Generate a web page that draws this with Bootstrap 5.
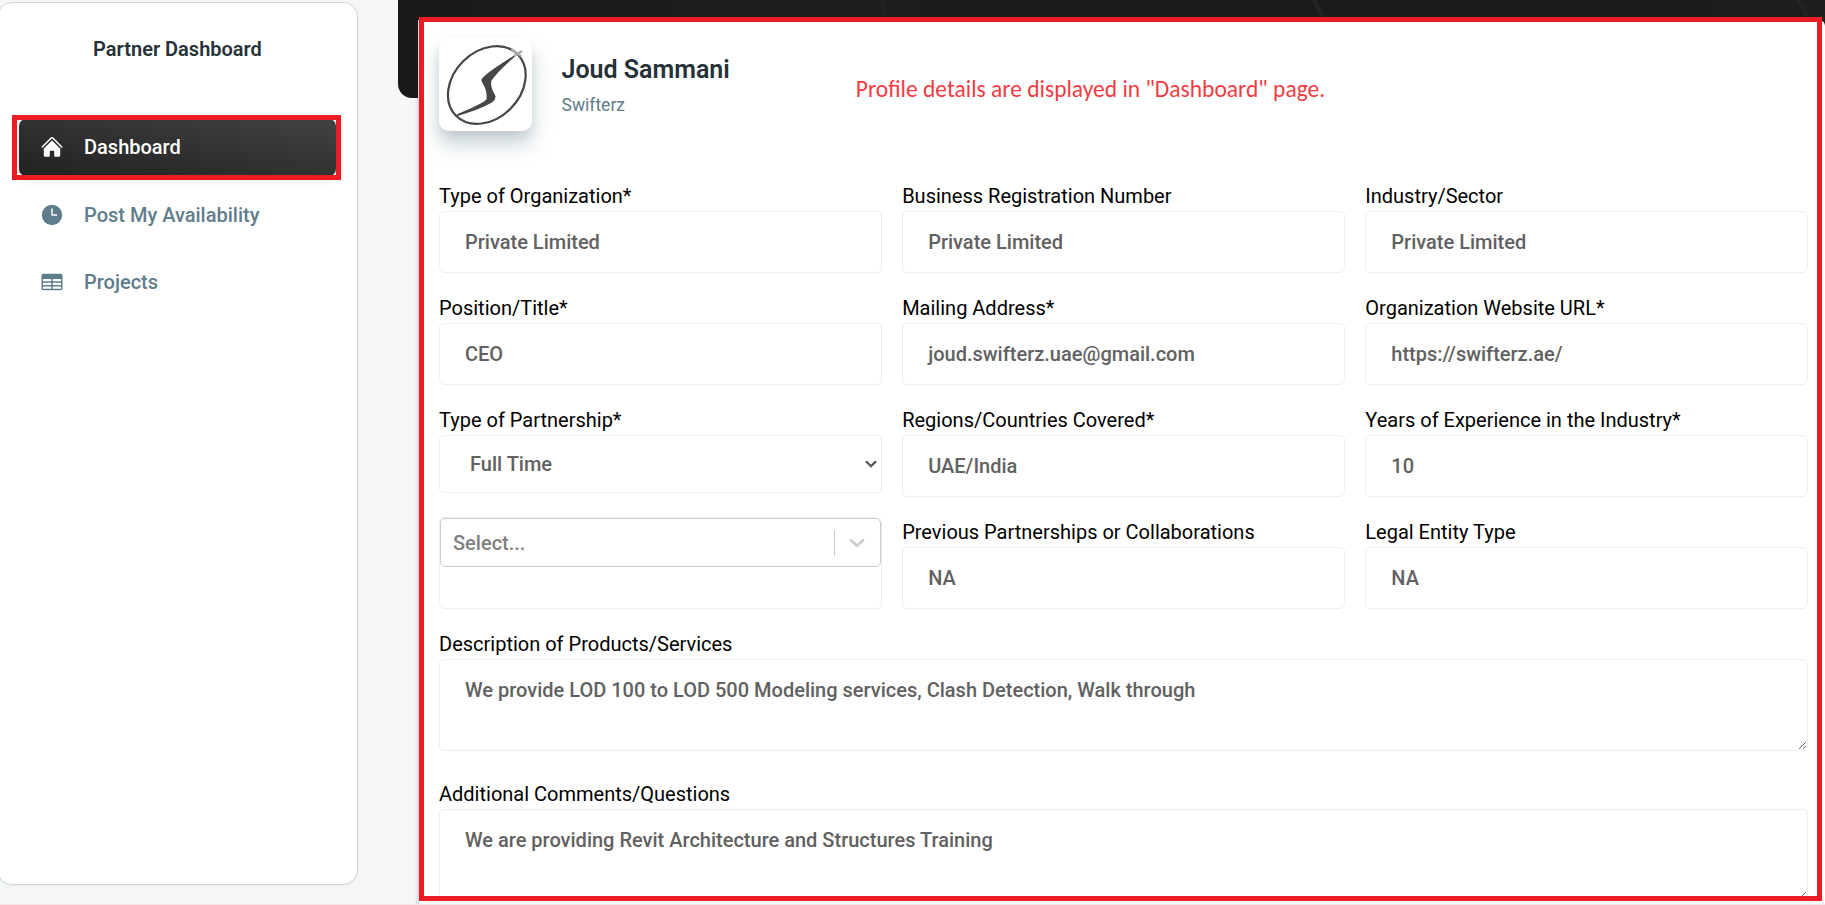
<!DOCTYPE html>
<html lang="en">
<head>
<meta charset="utf-8">
<meta name="viewport" content="width=device-width, initial-scale=1">
<title>Partner Dashboard</title>
<link href="https://cdn.jsdelivr.net/npm/bootstrap@5.3.0/dist/css/bootstrap.min.css" rel="stylesheet">
<style>
  body { height: 905px; overflow: hidden; background: #f5f6f8; font-family: Roboto, sans-serif; font-size: 20px; line-height: 30px; color: #000; }
  .side-panel { width: 361px; height: 883px; margin: 2px 0 0 -3px; background: #fff; border: 1px solid #cfd8dc; border-radius: 15px; box-shadow: 0 1px 2px rgba(0,0,0,.05); }
  .side-title { font-weight: 600; color: #263238; padding: 31px 0 0; }
  .side-nav { margin: 54.5px 21px 0; gap: 10.5px; }
  .side-nav .nav-link { height: 57px; padding: 0 0 0 20.5px; gap: 20.5px; font-weight: 500; color: #607d8b; border-radius: 7px; }
  .side-nav .nav-link.active { color: #fff; background: linear-gradient(10deg, #212121, #424242); box-shadow: 0 4px 8px rgba(0,0,0,.12); }
  .side-nav svg { width: 24px; height: 24px; flex: none; }
  .main-area { width: 1427px; height: 905px; margin-left: 40px; }
  .hero { height: 98px; border-bottom-left-radius: 14px; background: linear-gradient(62deg, transparent 38%, #272727 50%, transparent 62%) 910px 0 / 22px 18px no-repeat, linear-gradient(62deg, transparent 38%, #252525 50%, transparent 62%) 1394px 0 / 22px 18px no-repeat, linear-gradient(75deg, transparent 35%, #212121 50%, transparent 65%) 476px 0 / 20px 18px no-repeat, linear-gradient(90deg, #191919, #1d1d1d 25%, #1b1b1b 50%, #1a1a1a 75%, #1d1d1d); }
  .profile { height: 890px; margin: -78px 0 0 20px; padding: 18px 17px 0 20px; background: #fff; border-left: 1px solid #cfd8dc; border-top-right-radius: 6px; box-shadow: 0 2px 4px rgba(55,71,79,.25); position: relative; }
  .avatar-box { width: 93px; height: 93px; border-radius: 10px; background: #fff; box-shadow: 0 13px 20px rgba(96,125,139,.36), 0 4px 7px rgba(96,125,139,.1); }
  .person { margin-left: 29.5px; padding-top: 15px; }
  .person h1 { font-size: 25px; font-weight: 600; line-height: 33px; color: #263238; margin: 0 0 6px; }
  .person p { font-size: 17.5px; line-height: 26px; color: #607d8b; margin: 0; }
  .callout { font-family: Carlito, Lato, sans-serif; font-size: 23.5px; color: #f23c43; white-space: nowrap; margin-left: 126px; padding-top: 36px; }
  .fields { --bs-gutter-x: 20.5px; --bs-gutter-y: 20px; margin-top: 30px; }
  .fields label { display: block; height: 30px; }
  .fields .form-control { height: 62px; padding: 15px 25px; border: 1px solid #eee; border-radius: 5px; color: #616161; font-size: 20px; font-weight: 500; line-height: 30px; background: #fff; }
  .fields textarea.form-control { height: 92px; margin-bottom: 8px; }
  .fields .pick { height: 58px; padding: 0 4px 0 30px; }
  .fields .multi { height: 92px; padding: 0; }
  .multi-control { height: 49px; border: 1px solid #ccc; border-radius: 5px; color: #808080; padding-left: 12px; }
  .multi-arrow { width: 46px; height: 26px; border-left: 1px solid #ccc; }
  .mark-box { position: absolute; border: 5px solid #ed1c24; pointer-events: none; z-index: 5; }
  .mark-nav { left: 12px; top: 115px; width: 329px; height: 65px; }
  .mark-profile { left: 419px; top: 17px; width: 1403px; height: 884px; }
  .foot-line { position: absolute; left: 0; right: 0; top: 904px; height: 1px; background: #f5e3e6; z-index: 4; }
</style>
</head>
<body class="d-flex position-relative">
  <aside class="side-panel flex-shrink-0">
    <div class="side-title text-center">Partner Dashboard</div>
    <nav class="side-nav nav flex-column">
      <a class="nav-link active d-flex align-items-center" href="#">
        <svg viewBox="0 0 24 24" fill="currentColor"><path d="M11.47 3.84a.75.75 0 0 1 1.06 0l8.69 8.69a.75.75 0 1 0 1.06-1.06l-8.69-8.69a2.25 2.25 0 0 0-3.18 0l-8.69 8.69a.75.75 0 0 0 1.06 1.06l8.69-8.69z"/><path d="M12 5.43l8.16 8.16.09.09v6.2c0 1.03-.84 1.87-1.87 1.87H15a.75.75 0 0 1-.75-.75v-4.5a.75.75 0 0 0-.75-.75h-3a.75.75 0 0 0-.75.75V21a.75.75 0 0 1-.75.75H5.63a1.87 1.87 0 0 1-1.88-1.87v-6.2l.09-.09L12 5.43z"/></svg>
        <span>Dashboard</span>
      </a>
      <a class="nav-link d-flex align-items-center" href="#">
        <svg viewBox="0 0 24 24" fill="currentColor"><path fill-rule="evenodd" d="M12 1.8a10.2 10.2 0 1 0 0 20.4 10.2 10.2 0 0 0 0-20.4zM12.75 6a.75.75 0 0 0-1.5 0v6c0 .41.34.75.75.75h4.5a.75.75 0 0 0 0-1.5h-3.75V6z"/></svg>
        <span>Post My Availability</span>
      </a>
      <a class="nav-link d-flex align-items-center" href="#">
        <svg viewBox="0 0 24 24" fill="currentColor"><path fill-rule="evenodd" d="M1.5 5.63c0-1.04.84-1.88 1.88-1.88h17.25c1.03 0 1.87.84 1.87 1.88v12.75c0 1.03-.84 1.87-1.87 1.87H3.38a1.87 1.87 0 0 1-1.88-1.87V5.63zM21 9.38a.38.38 0 0 0-.38-.38h-7.5a.37.37 0 0 0-.37.38v1.5c0 .2.17.37.37.37h7.5a.38.38 0 0 0 .38-.37v-1.5zm0 3.75a.38.38 0 0 0-.38-.38h-7.5a.37.37 0 0 0-.37.38v1.5c0 .2.17.37.37.37h7.5a.38.38 0 0 0 .38-.37v-1.5zm0 3.75a.38.38 0 0 0-.38-.38h-7.5a.37.37 0 0 0-.37.38v1.5c0 .2.17.37.37.37h7.5a.38.38 0 0 0 .38-.37v-1.5zM10.88 18.75a.38.38 0 0 0 .37-.37v-1.5a.38.38 0 0 0-.37-.38h-7.5a.37.37 0 0 0-.38.38v1.5c0 .2.17.37.38.37h7.5zM3.38 15h7.5a.38.38 0 0 0 .37-.37v-1.5a.38.38 0 0 0-.37-.38h-7.5a.37.37 0 0 0-.38.38v1.5c0 .2.17.37.38.37zM3 10.88c0 .2.17.37.38.37h7.5a.38.38 0 0 0 .37-.37v-1.5a.38.38 0 0 0-.37-.38h-7.5a.37.37 0 0 0-.38.38v1.5z"/></svg>
        <span>Projects</span>
      </a>
    </nav>
  </aside>

  <main class="main-area flex-shrink-0">
    <div class="hero"></div>
    <section class="profile">
      <div class="d-flex align-items-start">
        <div class="avatar-box flex-shrink-0">
          <svg class="d-block" width="93" height="93" viewBox="0 -1.5 93 93"><ellipse cx="47.800" cy="45.500" rx="43.500" ry="33.500" transform="rotate(-45 47.8 45.5)" fill="none" stroke="#474747" stroke-width="2.200"/><path d="M78 14 C66 22 52 30 43 39 Q41.800 41 43.500 43.500 C47 49 48 54 47.500 60 C40 66 28 70 17.500 75 L18.500 76.500 C30 73 42 69 53 63 Q57 60 56.500 56.500 C54 51 51 47 52.500 41 C58 33 66 26 76 17 Z" fill="#474747"/><path d="M72 9.500 L82 16.500 M75 16.500 L83 11.500" stroke="#aaa" stroke-width="2.200"/></svg>
        </div>
        <div class="person">
          <h1>Joud Sammani</h1>
          <p>Swifterz</p>
        </div>
        <div class="callout">Profile details are displayed in "Dashboard" page.</div>
      </div>

      <form class="fields row">
        <div class="col-4"><label>Type of Organization*</label><div class="form-control">Private Limited</div></div>
        <div class="col-4"><label>Business Registration Number</label><div class="form-control">Private Limited</div></div>
        <div class="col-4"><label>Industry/Sector</label><div class="form-control">Private Limited</div></div>

        <div class="col-4"><label>Position/Title*</label><div class="form-control">CEO</div></div>
        <div class="col-4"><label>Mailing Address*</label><div class="form-control">joud.swifterz.uae@gmail.com</div></div>
        <div class="col-4"><label>Organization Website URL*</label><div class="form-control">https://swifterz.ae/</div></div>

        <div class="col-4"><label>Type of Partnership*</label>
          <div class="form-control pick d-flex align-items-center justify-content-between"><span>Full Time</span>
            <svg width="12" height="8" viewBox="0 0 12 8" fill="none" stroke="#555" stroke-width="2.300"><path d="M1 1.200 6 6.200 11 1.200"/></svg></div></div>
        <div class="col-4"><label>Regions/Countries Covered*</label><div class="form-control">UAE/India</div></div>
        <div class="col-4"><label>Years of Experience in the Industry*</label><div class="form-control">10</div></div>

        <div class="col-4"><div class="form-control multi">
          <div class="multi-control d-flex align-items-center justify-content-between"><span>Select...</span>
            <span class="multi-arrow d-flex align-items-center justify-content-center"><svg width="16" height="10" viewBox="0 0 16 10" fill="none" stroke="#ccc" stroke-width="2.800" stroke-linecap="round" stroke-linejoin="round"><path d="M2 2.200 8 7.800 14 2.200"/></svg></span></div></div></div>
        <div class="col-4"><label>Previous Partnerships or Collaborations</label><div class="form-control">NA</div></div>
        <div class="col-4"><label>Legal Entity Type</label><div class="form-control">NA</div></div>

        <div class="col-12"><label>Description of Products/Services</label><textarea class="form-control d-block">We provide LOD 100 to LOD 500 Modeling services, Clash Detection, Walk through</textarea></div>
        <div class="col-12"><label>Additional Comments/Questions</label><textarea class="form-control d-block">We are providing Revit Architecture and Structures Training</textarea></div>
      </form>
    </section>
  </main>

  <div class="mark-box mark-nav"></div>
  <div class="mark-box mark-profile"></div>
  <div class="foot-line"></div>
  <script src="https://cdn.jsdelivr.net/npm/bootstrap@5.3.0/dist/js/bootstrap.bundle.min.js"></script>
</body>
</html>
